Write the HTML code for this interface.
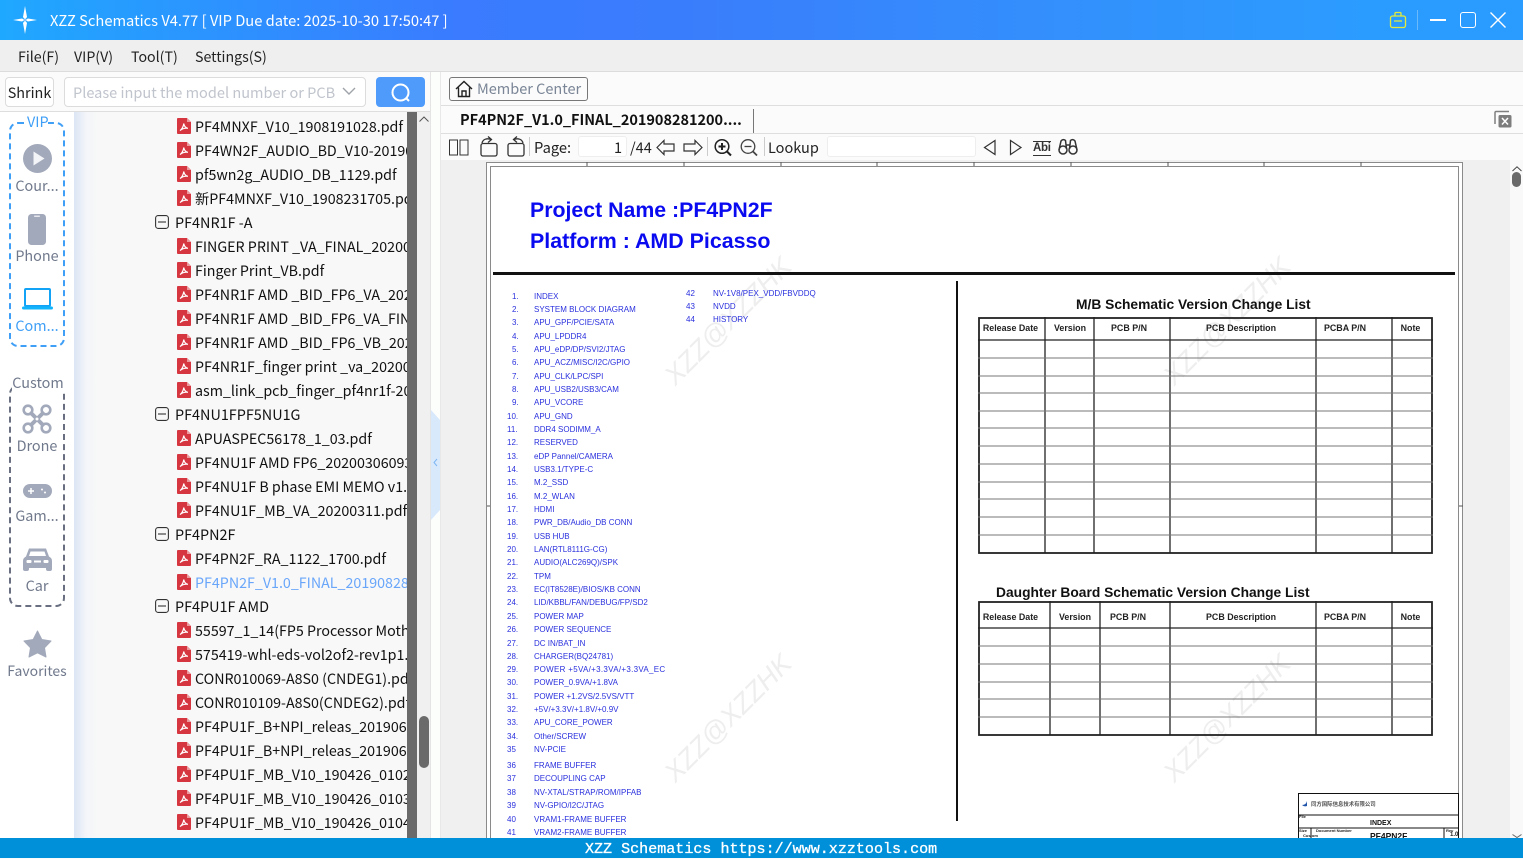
<!DOCTYPE html>
<html><head><meta charset="utf-8"><title>XZZ Schematics</title>
<style>
*{box-sizing:border-box}
html,body{margin:0;padding:0;width:1523px;height:858px;overflow:hidden;background:#fbfbfb;font-family:"Noto Sans CJK SC","Liberation Sans",sans-serif;color:#222}
.a{position:absolute}
.t{position:absolute;white-space:nowrap}
#tree{position:absolute;left:74px;top:112px;width:333px;height:726px;overflow:hidden;background:linear-gradient(90deg,#dbe5f5 0,#f3f5f9 12px,#f8f8f8 24px)}
#tree .r{position:absolute;left:121px;margin-top:1px;white-space:nowrap;font-size:14.25px;line-height:24px;height:24px;color:#111}
#tree .f{position:absolute;left:101px;margin-top:1px;white-space:nowrap;font-size:14.4px;line-height:24px;height:24px;color:#111}
#tree svg{position:absolute;left:103px;width:14px;height:16px}
#tree svg.m{left:81px;width:14px;height:14px}
.side{position:absolute;left:10px;width:54px;text-align:center;font-size:14.4px;line-height:20px;color:#70798c;white-space:nowrap}
.idx{position:absolute;top:0;height:838px;font-family:"Liberation Sans",sans-serif;font-size:8px;color:#2a30dd}
.idx span{position:absolute;margin-top:1px;white-space:nowrap;line-height:10px}
.wm{position:absolute;font-family:"Liberation Sans",sans-serif;font-style:italic;font-size:27px;line-height:36px;color:#eeeeee;white-space:nowrap;transform:rotate(-45deg);transform-origin:center;width:180px;text-align:center}
.th{position:absolute;font-family:"Liberation Sans",sans-serif;font-weight:bold;font-size:8.9px;line-height:10px;color:#222;white-space:nowrap;text-align:center}
</style></head>
<body>
<svg width="0" height="0" style="position:absolute"><defs>
<symbol id="pdf" viewBox="0 0 14 16"><path d="M1 0H10L14 4V15a1 1 0 0 1-1 1H1a1 1 0 0 1-1-1V1a1 1 0 0 1 1-1z" fill="#d5363f"/><path d="M10 0L14 4H10z" fill="#eb9a9e"/><path d="M3 12.5C5 11.5 6.500 8 6.800 5.500C7 7.800 8.500 10 11 10.300C8.500 10 5.500 10.500 3 12.500z" fill="none" stroke="#fff" stroke-width="1.200"/></symbol>
<symbol id="minus" viewBox="0 0 14 14"><rect x=".6" y=".6" width="12.800" height="12.800" rx="2.500" fill="none" stroke="#333" stroke-width="1.100"/><path d="M3 7H11" stroke="#333" stroke-width="1.100"/></symbol>
</defs></svg>

<!-- title bar -->
<div class="a" style="left:0;top:0;width:1523px;height:40px;background:linear-gradient(90deg,#1fa8ff 0,#3a7bff 30%,#3a7dfc 45%,#3390fc 70%,#2b9cff 90%)"></div>
<svg class="a" style="left:12px;top:5px" width="26" height="30" viewBox="0 0 26 30"><path d="M13 1L15 12L13 15L11 12zM13 29L15 18L13 15L11 18zM1 15L10 13.500L13 15L10 16.500zM25 15L16 13.500L13 15L16 16.500z" fill="#fff"/><circle cx="13" cy="15" r="1.500" fill="#7ac3ff"/></svg>
<div class="t" style="left:50px;top:10px;font-size:14.7px;line-height:22px;color:#fff">XZZ Schematics V4.77 [ VIP Due date: 2025-10-30 17:50:47 ]</div>
<svg class="a" style="left:1389px;top:11px" width="18" height="18" viewBox="0 0 18 18" fill="none" stroke="#e4ea3a" stroke-width="1.300"><rect x="1.500" y="5" width="15" height="11.500" rx="2"/><path d="M6 5V2.500a1 1 0 0 1 1-1H11a1 1 0 0 1 1 1V5M5 10H13"/></svg>
<div class="a" style="left:1417px;top:10px;width:1px;height:20px;background:#6ab9fb"></div>
<div class="a" style="left:1430px;top:19px;width:16px;height:2px;background:#fff"></div>
<div class="a" style="left:1460px;top:12px;width:16px;height:16px;border:1.500px solid #fff;border-radius:3px"></div>
<svg class="a" style="left:1490px;top:12px" width="16" height="16" viewBox="0 0 16 16"><path d="M.5 .5L15.500 15.500M15.500 .5L.5 15.500" stroke="#fff" stroke-width="1.400"/></svg>

<!-- menu -->
<div class="a" style="left:0;top:40px;width:1523px;height:32px;background:#efefef;border-bottom:1px solid #dcdcdc"></div>
<div class="t" style="left:18px;top:46px;font-size:14.2px;line-height:22px">File(F)</div>
<div class="t" style="left:74px;top:46px;font-size:14.2px;line-height:22px">VIP(V)</div>
<div class="t" style="left:131px;top:46px;font-size:14.2px;line-height:22px">Tool(T)</div>
<div class="t" style="left:195px;top:46px;font-size:14.2px;line-height:22px">Settings(S)</div>

<!-- left top controls -->
<div class="a" style="left:0;top:72px;width:431px;height:40px;background:#fbfbfb;border-bottom:1px solid #dedede"></div>
<div class="a" style="left:430px;top:72px;width:1px;height:766px;background:#e4e4e4"></div>
<div class="t" style="left:5px;top:77px;width:49px;height:30px;border:1px solid #dcdcdc;border-radius:4px;background:#fff;font-size:14.4px;line-height:29px;text-align:center">Shrink</div>
<div class="a" style="left:64px;top:77px;width:302px;height:30px;border:1px solid #dcdcdc;border-radius:4px;background:#fff"></div>
<div class="t" style="left:73px;top:82px;font-size:14.55px;line-height:22px;color:#c0c4cc">Please input the model number or PCB</div>
<svg class="a" style="left:342px;top:87px" width="14" height="9" viewBox="0 0 14 9"><path d="M1 1L7 7L13 1" fill="none" stroke="#9ea2a9" stroke-width="1.400"/></svg>
<div class="a" style="left:376px;top:77px;width:49px;height:30px;border-radius:4px;background:#4f9bfb"></div>
<svg class="a" style="left:390px;top:82px" width="22" height="22" viewBox="0 0 22 22" fill="none" stroke="#fff" stroke-width="2"><circle cx="10.500" cy="10.500" r="8"/><path d="M16.500 16.500L19 19"/></svg>

<!-- sidebar -->
<div class="a" style="left:0;top:112px;width:74px;height:726px;background:#fff"></div>
<div class="a" style="left:9px;top:122px;width:56px;height:225px;border:2px dashed #3f9ff6;border-radius:9px"></div>
<div class="t" style="left:27px;top:112px;width:21px;text-align:center;font-size:14.4px;line-height:20px;color:#3f9ff6;background:#fff">VIP</div>
<svg class="a" style="left:23px;top:144px" width="29" height="29" viewBox="0 0 29 29"><circle cx="14.500" cy="14.500" r="14.500" fill="#a2a9ba"/><path d="M10.500 7.500L21.500 14.500L10.500 21.500z" fill="#f3f4f7"/></svg>
<div class="side" style="top:176px">Cour...</div>
<svg class="a" style="left:28px;top:214px" width="18" height="31" viewBox="0 0 18 31"><rect width="18" height="31" rx="3.500" fill="#a2a9ba"/><rect x="6" y="1.500" width="6" height="1.500" rx=".7" fill="#e6e8ee"/></svg>
<div class="side" style="top:246px">Phone</div>
<svg class="a" style="left:22px;top:288px" width="31" height="22" viewBox="0 0 31 22"><rect x="3" y="1" width="25" height="17" rx="1" fill="none" stroke="#12a3f6" stroke-width="2"/><rect x="0" y="18.500" width="31" height="3" rx="1.500" fill="#12b4fb"/></svg>
<div class="side" style="top:316px;color:#3f9ff6">Com...</div>

<div class="a" style="left:9px;top:385px;width:56px;height:222px;border:2px dashed #696f80;border-radius:9px"></div>
<div class="t" style="left:12px;top:373px;width:52px;text-align:center;font-size:14.4px;line-height:20px;color:#70798c;background:#fff">Custom</div>
<svg class="a" style="left:22px;top:404px" width="30" height="30" viewBox="0 0 30 30"><g fill="none" stroke="#a2a9ba"><circle cx="6" cy="6" r="4.300" stroke-width="2.600"/><circle cx="24" cy="6" r="4.300" stroke-width="2.600"/><circle cx="6" cy="24" r="4.300" stroke-width="2.600"/><circle cx="24" cy="24" r="4.300" stroke-width="2.600"/><path d="M8 8L22 22M22 8L8 22" stroke-width="4"/></g><circle cx="15" cy="15" r="1.500" fill="#fff"/></svg>
<div class="side" style="top:436px">Drone</div>
<svg class="a" style="left:23px;top:484px" width="29" height="14" viewBox="0 0 29 14"><rect width="29" height="14" rx="7" fill="#a2a9ba"/><path d="M8 4V10M5 7H11" stroke="#fff" stroke-width="1.500"/><circle cx="19" cy="5.500" r="1" fill="#fff"/><circle cx="22" cy="8.500" r="1" fill="#fff"/></svg>
<div class="side" style="top:506px">Gam...</div>
<svg class="a" style="left:23px;top:547px" width="29" height="25" viewBox="0 0 29 25"><path d="M6 1.500H23L26 9.500Q29 11 29 14V22a2 2 0 0 1-2 2H25a2 2 0 0 1-2-2V21H6V22a2 2 0 0 1-2 2H2a2 2 0 0 1-2-2V14Q0 11 3 9.500z" fill="#a2a9ba"/><path d="M7.500 4.500H21.500L23 9H6z" fill="#fff"/><rect x="3.500" y="13" width="5" height="3" rx="1" fill="#fff"/><rect x="20.500" y="13" width="5" height="3" rx="1" fill="#fff"/><rect x="11" y="13.500" width="7" height="2" fill="#fff"/></svg>
<div class="side" style="top:576px">Car</div>
<svg class="a" style="left:23px;top:630px" width="29" height="28" viewBox="0 0 29 28"><path d="M14.500 1L18.800 9.500L28 11L21.500 17.800L23 27L14.500 22.800L6 27L7.500 17.800L1 11L10.200 9.500z" fill="#a2a9ba" stroke="#a2a9ba" stroke-width="1" stroke-linejoin="round"/></svg>
<div class="side" style="top:661px;left:7px;width:60px;font-size:14px">Favorites</div>

<!-- tree -->
<div id="tree">
<svg style="top:6px"><use href="#pdf"/></svg><div class="r" style="top:2px">PF4MNXF_V10_1908191028.pdf</div>
<svg style="top:30px"><use href="#pdf"/></svg><div class="r" style="top:26px">PF4WN2F_AUDIO_BD_V10-20190722.pdf</div>
<svg style="top:54px"><use href="#pdf"/></svg><div class="r" style="top:50px">pf5wn2g_AUDIO_DB_1129.pdf</div>
<svg style="top:78px"><use href="#pdf"/></svg><div class="r" style="top:74px">新PF4MNXF_V10_1908231705.pdf</div>
<svg class="m" style="top:103px"><use href="#minus"/></svg><div class="f" style="top:98px">PF4NR1F -A</div>
<svg style="top:126px"><use href="#pdf"/></svg><div class="r" style="top:122px">FINGER PRINT _VA_FINAL_20200312.pdf</div>
<svg style="top:150px"><use href="#pdf"/></svg><div class="r" style="top:146px">Finger Print_VB.pdf</div>
<svg style="top:174px"><use href="#pdf"/></svg><div class="r" style="top:170px">PF4NR1F AMD _BID_FP6_VA_20200312.pdf</div>
<svg style="top:198px"><use href="#pdf"/></svg><div class="r" style="top:194px">PF4NR1F AMD _BID_FP6_VA_FINAL.pdf</div>
<svg style="top:222px"><use href="#pdf"/></svg><div class="r" style="top:218px">PF4NR1F AMD _BID_FP6_VB_20200312.pdf</div>
<svg style="top:246px"><use href="#pdf"/></svg><div class="r" style="top:242px">PF4NR1F_finger print _va_20200312.pdf</div>
<svg style="top:270px"><use href="#pdf"/></svg><div class="r" style="top:266px">asm_link_pcb_finger_pf4nr1f-20200312.pdf</div>
<svg class="m" style="top:295px"><use href="#minus"/></svg><div class="f" style="top:290px">PF4NU1FPF5NU1G</div>
<svg style="top:318px"><use href="#pdf"/></svg><div class="r" style="top:314px">APUASPEC56178_1_03.pdf</div>
<svg style="top:342px"><use href="#pdf"/></svg><div class="r" style="top:338px">PF4NU1F AMD FP6_20200306093000.pdf</div>
<svg style="top:366px"><use href="#pdf"/></svg><div class="r" style="top:362px">PF4NU1F B phase EMI MEMO v1.0.pdf</div>
<svg style="top:390px"><use href="#pdf"/></svg><div class="r" style="top:386px">PF4NU1F_MB_VA_20200311.pdf</div>
<svg class="m" style="top:415px"><use href="#minus"/></svg><div class="f" style="top:410px">PF4PN2F</div>
<svg style="top:438px"><use href="#pdf"/></svg><div class="r" style="top:434px">PF4PN2F_RA_1122_1700.pdf</div>
<svg style="top:462px"><use href="#pdf"/></svg><div class="r" style="top:458px;color:#69a6fa">PF4PN2F_V1.0_FINAL_201908281200.pdf</div>
<svg class="m" style="top:487px"><use href="#minus"/></svg><div class="f" style="top:482px">PF4PU1F AMD</div>
<svg style="top:510px"><use href="#pdf"/></svg><div class="r" style="top:506px">55597_1_14(FP5 Processor Motherboard).pdf</div>
<svg style="top:534px"><use href="#pdf"/></svg><div class="r" style="top:530px">575419-whl-eds-vol2of2-rev1p1.pdf</div>
<svg style="top:558px"><use href="#pdf"/></svg><div class="r" style="top:554px">CONR010069-A8S0 (CNDEG1).pdf</div>
<svg style="top:582px"><use href="#pdf"/></svg><div class="r" style="top:578px">CONR010109-A8S0(CNDEG2).pdf</div>
<svg style="top:606px"><use href="#pdf"/></svg><div class="r" style="top:602px">PF4PU1F_B+NPI_releas_20190621.pdf</div>
<svg style="top:630px"><use href="#pdf"/></svg><div class="r" style="top:626px">PF4PU1F_B+NPI_releas_20190624.pdf</div>
<svg style="top:654px"><use href="#pdf"/></svg><div class="r" style="top:650px">PF4PU1F_MB_V10_190426_0102.pdf</div>
<svg style="top:678px"><use href="#pdf"/></svg><div class="r" style="top:674px">PF4PU1F_MB_V10_190426_0103.pdf</div>
<svg style="top:702px"><use href="#pdf"/></svg><div class="r" style="top:698px">PF4PU1F_MB_V10_190426_0104.pdf</div>
</div>
<div class="a" style="left:407px;top:112px;width:10px;height:726px;background:#6a6a6a"></div>
<div class="a" style="left:417px;top:112px;width:13px;height:726px;background:#f0f0f0"></div>
<svg class="a" style="left:419px;top:116px" width="10" height="7" viewBox="0 0 10 7"><path d="M.5 5.500L5 1L9.500 5.500" fill="none" stroke="#555" stroke-width="1"/></svg>
<div class="a" style="left:419px;top:716px;width:10px;height:52px;border-radius:5px;background:#6a6a6a"></div>

<!-- splitter -->
<div class="a" style="left:431px;top:72px;width:10px;height:766px;background:#fcfefc;border-right:1px solid #e8e8e8"></div>
<svg class="a" style="left:431px;top:408px" width="10" height="114" viewBox="0 0 10 114"><path d="M0 2L9 12V102L0 112z" fill="#d8e9fc"/><path d="M6 51L3 54.500L6 58" fill="none" stroke="#7fb7f3" stroke-width="1"/></svg>

<!-- right header -->
<div class="a" style="left:441px;top:105px;width:1082px;height:1px;background:#dedede"></div>
<div class="t" style="left:449px;top:77px;width:139px;height:24px;border:1px solid #777;border-radius:3px;background:#fbfbfb"></div>
<svg class="a" style="left:455px;top:80px" width="18" height="18" viewBox="0 0 18 18" fill="none" stroke="#222" stroke-width="1.400"><path d="M1 9L9 1.500L17 9M3.500 7.500V16.500H14.500V7.500M7 16.500V11H11V16.500"/></svg>
<div class="t" style="left:477px;top:78px;font-size:14.5px;line-height:22px;color:#7a8596">Member Center</div>
<div class="t" style="left:460px;top:108px;font-size:14.45px;line-height:24px;font-weight:bold;color:#111">PF4PN2F_V1.0_FINAL_201908281200....</div>
<div class="a" style="left:753px;top:109px;width:1px;height:24px;background:#777"></div>
<div class="a" style="left:441px;top:133px;width:1082px;height:1px;background:#dedede"></div>
<svg class="a" style="left:1494px;top:110px" width="18" height="18" viewBox="0 0 18 18"><path d="M1 14V2.500a1 1 0 0 1 1-1H15" fill="none" stroke="#808080" stroke-width="1.500"/><rect x="4.500" y="5" width="13" height="12.500" rx="1.500" fill="#7d7d7d"/><path d="M8 8L14 14.500M14 8L8 14.500" stroke="#fff" stroke-width="1.500"/></svg>

<!-- toolbar -->
<svg class="a" style="left:449px;top:139px" width="20" height="17" viewBox="0 0 20 17" fill="none" stroke="#333" stroke-width="1"><rect x=".5" y="1" width="8" height="15"/><rect x="11" y="1" width="8" height="15"/></svg>
<svg class="a" style="left:479px;top:136px" width="48" height="21" viewBox="0 0 48 21" fill="none" stroke="#333" stroke-width="1.300"><rect x="2" y="7.500" width="16" height="12.500" rx="2"/><path d="M3 7C4 3 8 2 12 3.500M9 .5L12.500 3.500L9 6.500"/><rect x="29" y="7.500" width="16" height="12.500" rx="2"/><path d="M44 7C43 3 39 2 35 3.500M38 .5L34.500 3.500L38 6.500"/></svg>
<div class="a" style="left:529px;top:137px;width:1px;height:19px;background:#ccc"></div>
<div class="t" style="left:534px;top:137px;font-size:14.7px;line-height:22px">Page:</div>
<div class="a" style="left:578px;top:136px;width:49px;height:21px;background:#fff;border:1px solid #eee;border-radius:3px"></div>
<div class="t" style="left:578px;top:137px;width:44px;text-align:right;font-size:14.5px;line-height:22px">1</div>
<div class="t" style="left:630px;top:137px;font-size:14.5px;line-height:22px">/44</div>
<svg class="a" style="left:656px;top:139px" width="47" height="17" viewBox="0 0 47 17" fill="none" stroke="#333" stroke-width="1.200"><path d="M1 8.500L8 1.500V5H18V12H8V15.500z"/><path d="M46 8.500L39 1.500V5H28V12H39V15.500z"/></svg>
<div class="a" style="left:707px;top:137px;width:1px;height:19px;background:#ccc"></div>
<svg class="a" style="left:713px;top:138px" width="20" height="19" viewBox="0 0 20 19" fill="none" stroke="#222" stroke-width="1.500"><circle cx="9" cy="8.500" r="6.800"/><path d="M14 13.500L18 17.500" stroke-width="2"/><path d="M5.500 8.500H12.500M9 5V12" stroke-width="2"/></svg>
<svg class="a" style="left:739px;top:138px" width="20" height="19" viewBox="0 0 20 19" fill="none" stroke="#444" stroke-width="1.300"><circle cx="9" cy="8.500" r="6.800"/><path d="M14 13.500L18 17.500" stroke-width="1.800"/><path d="M5.500 8.500H12.500"/></svg>
<div class="a" style="left:764px;top:137px;width:1px;height:19px;background:#ccc"></div>
<div class="t" style="left:768px;top:137px;font-size:14.5px;line-height:22px">Lookup</div>
<div class="a" style="left:827px;top:136px;width:149px;height:21px;background:#fff;border:1px solid #eee;border-radius:3px"></div>
<svg class="a" style="left:983px;top:139px" width="40" height="17" viewBox="0 0 40 17" fill="none" stroke="#333" stroke-width="1.200"><path d="M12 1.500V15.500L1.500 8.500z"/><path d="M27.500 1.500V15.500L38 8.500z"/></svg>
<div class="t" style="left:1033px;top:141px;font-family:'Liberation Sans',sans-serif;font-size:11.500px;line-height:13px;font-weight:bold;color:#333;border-top:1px solid #333;border-bottom:1px solid #333;letter-spacing:-.3px">Abi</div>
<svg class="a" style="left:1058px;top:138px" width="20" height="18" viewBox="0 0 20 18" fill="none" stroke="#333" stroke-width="1.500"><circle cx="5" cy="12" r="4"/><circle cx="15" cy="12" r="4"/><path d="M1 12L3 3Q5 .5 7.500 2.500L8.500 11M19 12L17 3Q15 .5 12.500 2.500L11.500 11M8.500 7H11.500"/></svg>

<!-- PDF view -->
<div class="a" style="left:441px;top:160px;width:1069px;height:678px;background:#f0f0f0"></div>
<div class="a" style="left:1510px;top:160px;width:13px;height:678px;background:#f9f9f9"></div>
<svg class="a" style="left:1512px;top:166px" width="10" height="6" viewBox="0 0 10 6"><path d="M.5 5L5 .8L9.500 5" fill="none" stroke="#444" stroke-width="1"/></svg>
<div class="a" style="left:1512px;top:172px;width:9px;height:15px;border-radius:5px;background:#6a6a6a"></div>
<svg class="a" style="left:1512px;top:834px" width="10" height="4" viewBox="0 0 10 4"><path d="M.5 .5L5 3.500L9.500 .5" fill="none" stroke="#666" stroke-width="1"/></svg>

<div class="a" style="left:486px;top:162px;width:977px;height:676px;background:#fff;border:1px solid #8a8a8a;border-bottom:0"></div>
<div class="a" style="left:490px;top:166px;width:969px;height:672px;background:#fff;border:1px solid #8a8a8a;border-bottom:0"></div>
<svg class="a" style="left:486px;top:162px" width="977" height="676" viewBox="0 0 977 676"><path d="M101 0V4M198 0V4M295 0V4M391 0V4M488 0V4M585 0V4M682 0V4M778 0V4M875 0V4M1 344H4M973 344H977" stroke="#555" stroke-width="1"/></svg>

<div class="wm" style="left:638px;top:700px">XZZ@XZZHK</div>
<div class="wm" style="left:1137px;top:700px">XZZ@XZZHK</div>
<div class="wm" style="left:638px;top:303px">XZZ@XZZHK</div>
<div class="wm" style="left:1137px;top:303px">XZZ@XZZHK</div>

<div class="t" style="left:530px;top:196px;font-family:'Liberation Sans',sans-serif;font-weight:bold;font-size:21.3px;line-height:28px;color:#0a0af0">Project Name :PF4PN2F</div>
<div class="t" style="left:530px;top:227px;font-family:'Liberation Sans',sans-serif;font-weight:bold;font-size:21.4px;line-height:28px;color:#0a0af0">Platform : AMD Picasso</div>
<div class="a" style="left:493px;top:272px;width:962px;height:3px;background:#111"></div>
<div class="a" style="left:956px;top:281px;width:2px;height:540px;background:#111"></div>

<div class="idx" style="left:0;width:900px">
<span style="left:512px;top:291px">1.</span><span style="left:534px;top:291px">INDEX</span>
<span style="left:512px;top:304px">2.</span><span style="left:534px;top:304px">SYSTEM BLOCK DIAGRAM</span>
<span style="left:512px;top:317px">3.</span><span style="left:534px;top:317px">APU_GPF/PCIE/SATA</span>
<span style="left:512px;top:331px">4.</span><span style="left:534px;top:331px">APU_LPDDR4</span>
<span style="left:512px;top:344px">5.</span><span style="left:534px;top:344px">APU_eDP/DP/SVI2/JTAG</span>
<span style="left:512px;top:357px">6.</span><span style="left:534px;top:357px">APU_ACZ/MISC/I2C/GPIO</span>
<span style="left:512px;top:371px">7.</span><span style="left:534px;top:371px">APU_CLK/LPC/SPI</span>
<span style="left:512px;top:384px">8.</span><span style="left:534px;top:384px">APU_USB2/USB3/CAM</span>
<span style="left:512px;top:397px">9.</span><span style="left:534px;top:397px">APU_VCORE</span>
<span style="left:507px;top:411px">10.</span><span style="left:534px;top:411px">APU_GND</span>
<span style="left:507px;top:424px">11.</span><span style="left:534px;top:424px">DDR4 SODIMM_A</span>
<span style="left:507px;top:437px">12.</span><span style="left:534px;top:437px">RESERVED</span>
<span style="left:507px;top:451px">13.</span><span style="left:534px;top:451px">eDP Pannel/CAMERA</span>
<span style="left:507px;top:464px">14.</span><span style="left:534px;top:464px">USB3.1/TYPE-C</span>
<span style="left:507px;top:477px">15.</span><span style="left:534px;top:477px">M.2_SSD</span>
<span style="left:507px;top:491px">16.</span><span style="left:534px;top:491px">M.2_WLAN</span>
<span style="left:507px;top:504px">17.</span><span style="left:534px;top:504px">HDMI</span>
<span style="left:507px;top:517px">18.</span><span style="left:534px;top:517px">PWR_DB/Audio_DB CONN</span>
<span style="left:507px;top:531px">19.</span><span style="left:534px;top:531px">USB HUB</span>
<span style="left:507px;top:544px">20.</span><span style="left:534px;top:544px">LAN(RTL8111G-CG)</span>
<span style="left:507px;top:557px">21.</span><span style="left:534px;top:557px">AUDIO(ALC269Q)/SPK</span>
<span style="left:507px;top:571px">22.</span><span style="left:534px;top:571px">TPM</span>
<span style="left:507px;top:584px">23.</span><span style="left:534px;top:584px">EC(IT8528E)/BIOS/KB CONN</span>
<span style="left:507px;top:597px">24.</span><span style="left:534px;top:597px">LID/KBBL/FAN/DEBUG/FP/SD2</span>
<span style="left:507px;top:611px">25.</span><span style="left:534px;top:611px">POWER MAP</span>
<span style="left:507px;top:624px">26.</span><span style="left:534px;top:624px">POWER SEQUENCE</span>
<span style="left:507px;top:638px">27.</span><span style="left:534px;top:638px">DC IN/BAT_IN</span>
<span style="left:507px;top:651px">28.</span><span style="left:534px;top:651px">CHARGER(BQ24781)</span>
<span style="left:507px;top:664px">29.</span><span style="left:534px;top:664px;letter-spacing:.3px">POWER +5VA/+3.3VA/+3.3VA_EC</span>
<span style="left:507px;top:677px">30.</span><span style="left:534px;top:677px">POWER_0.9VA/+1.8VA</span>
<span style="left:507px;top:691px">31.</span><span style="left:534px;top:691px">POWER +1.2VS/2.5VS/VTT</span>
<span style="left:507px;top:704px">32.</span><span style="left:534px;top:704px">+5V/+3.3V/+1.8V/+0.9V</span>
<span style="left:507px;top:717px">33.</span><span style="left:534px;top:717px">APU_CORE_POWER</span>
<span style="left:507px;top:731px">34.</span><span style="left:534px;top:731px">Other/SCREW</span>
<span style="left:507px;top:744px">35</span><span style="left:534px;top:744px">NV-PCIE</span>
<span style="left:507px;top:760px">36</span><span style="left:534px;top:760px">FRAME BUFFER</span>
<span style="left:507px;top:773px">37</span><span style="left:534px;top:773px">DECOUPLING CAP</span>
<span style="left:507px;top:787px">38</span><span style="left:534px;top:787px">NV-XTAL/STRAP/ROM/IPFAB</span>
<span style="left:507px;top:800px">39</span><span style="left:534px;top:800px">NV-GPIO/I2C/JTAG</span>
<span style="left:507px;top:814px">40</span><span style="left:534px;top:814px">VRAM1-FRAME BUFFER</span>
<span style="left:507px;top:827px">41</span><span style="left:534px;top:827px">VRAM2-FRAME BUFFER</span>
<span style="left:686px;top:288px">42</span><span style="left:713px;top:288px">NV-1V8/PEX_VDD/FBVDDQ</span>
<span style="left:686px;top:301px">43</span><span style="left:713px;top:301px">NVDD</span>
<span style="left:686px;top:314px">44</span><span style="left:713px;top:314px">HISTORY</span>
</div>

<!-- table 1 -->
<div class="t" style="left:1076px;top:296px;font-family:'Liberation Sans',sans-serif;font-weight:bold;font-size:13.8px;line-height:18px;color:#111">M/B Schematic Version Change List</div>
<svg class="a" style="left:978px;top:317px" width="456" height="238" viewBox="0 0 456 238">
<rect x="1" y="1" width="453" height="235" fill="none" stroke="#222" stroke-width="1.800"/>
<path d="M67 0V236M116 0V236M192 0V236M338 0V236M414 0V236M0 23H455" stroke="#222" stroke-width="1.300" fill="none"/>
<path d="M0 41H455M0 59H455M0 76H455M0 94H455M0 111H455M0 129H455M0 147H455M0 165H455M0 182H455M0 200H455M0 218H455" stroke="#777" stroke-width="1" fill="none"/>
</svg>
<div class="th" style="left:977px;top:323px;width:67px">Release Date</div>
<div class="th" style="left:1045px;top:323px;width:50px">Version</div>
<div class="th" style="left:1094px;top:323px;width:70px">PCB P/N</div>
<div class="th" style="left:1170px;top:323px;width:142px">PCB Description</div>
<div class="th" style="left:1316px;top:323px;width:58px">PCBA P/N</div>
<div class="th" style="left:1390px;top:323px;width:41px">Note</div>

<!-- table 2 -->
<div class="t" style="left:996px;top:584px;font-family:'Liberation Sans',sans-serif;font-weight:bold;font-size:13.8px;line-height:18px;color:#111">Daughter Board Schematic Version Change List</div>
<svg class="a" style="left:978px;top:601px" width="456" height="136" viewBox="0 0 456 136">
<rect x="1" y="1" width="453" height="133" fill="none" stroke="#222" stroke-width="1.800"/>
<path d="M72 0V134M122 0V134M192 0V134M338 0V134M414 0V134M0 27H455" stroke="#222" stroke-width="1.300" fill="none"/>
<path d="M0 45H455M0 63H455M0 81H455M0 98H455M0 116H455" stroke="#777" stroke-width="1" fill="none"/>
</svg>
<div class="th" style="left:977px;top:612px;width:67px">Release Date</div>
<div class="th" style="left:1050px;top:612px;width:50px">Version</div>
<div class="th" style="left:1100px;top:612px;width:56px">PCB P/N</div>
<div class="th" style="left:1170px;top:612px;width:142px">PCB Description</div>
<div class="th" style="left:1316px;top:612px;width:58px">PCBA P/N</div>
<div class="th" style="left:1390px;top:612px;width:41px">Note</div>

<!-- title block -->
<svg class="a" style="left:1298px;top:793px" width="162" height="45" viewBox="0 0 162 45" fill="none" stroke="#111" stroke-width="1">
<rect x=".5" y=".5" width="160" height="50"/><path d="M0 22H161M0 35H161M13 35V45M146 35V45"/>
<path d="M4 12Q8 12 9 8L9 13Q6 14 4 12z" fill="#2255aa" stroke="none"/>
</svg>
<div class="t" style="left:1311px;top:799px;font-size:5.4px;line-height:10px;color:#555;font-weight:bold">同方国际信息技术有限公司</div>
<div class="t" style="left:1299px;top:814px;font-family:'Liberation Sans',sans-serif;font-size:4px;line-height:6px;font-weight:bold">File</div>
<div class="t" style="left:1370px;top:820px;font-family:'Liberation Sans',sans-serif;font-size:7px;line-height:8px;font-weight:bold;color:#111">INDEX</div>
<div class="t" style="left:1299px;top:828px;font-family:'Liberation Sans',sans-serif;font-size:4px;line-height:5px;font-weight:bold">Size</div>
<div class="t" style="left:1316px;top:828px;font-family:'Liberation Sans',sans-serif;font-size:4px;line-height:5px;font-weight:bold">Document Number</div>
<div class="t" style="left:1303px;top:833px;font-family:'Liberation Sans',sans-serif;font-size:4px;line-height:5px;font-weight:bold">Custom</div>
<div class="t" style="left:1370px;top:831px;font-family:'Liberation Sans',sans-serif;font-size:8.500px;line-height:10px;font-weight:bold;color:#111">PF4PN2F</div>
<div class="t" style="left:1446px;top:828px;font-family:'Liberation Sans',sans-serif;font-size:4px;line-height:5px;font-weight:bold">Rev</div>
<div class="t" style="left:1450px;top:832px;font-family:'Liberation Sans',sans-serif;font-size:6px;line-height:7px;font-weight:bold">1.0</div>

<!-- status bar -->
<div class="a" style="left:0;top:838px;width:1523px;height:20px;background:#0090d9"></div>
<div class="t" style="left:585px;top:839px;font-family:'Liberation Mono',monospace;font-size:15.05px;line-height:20px;color:#fff;-webkit-text-stroke:.3px #fff">XZZ Schematics https://www.xzztools.com</div>
</body></html>
